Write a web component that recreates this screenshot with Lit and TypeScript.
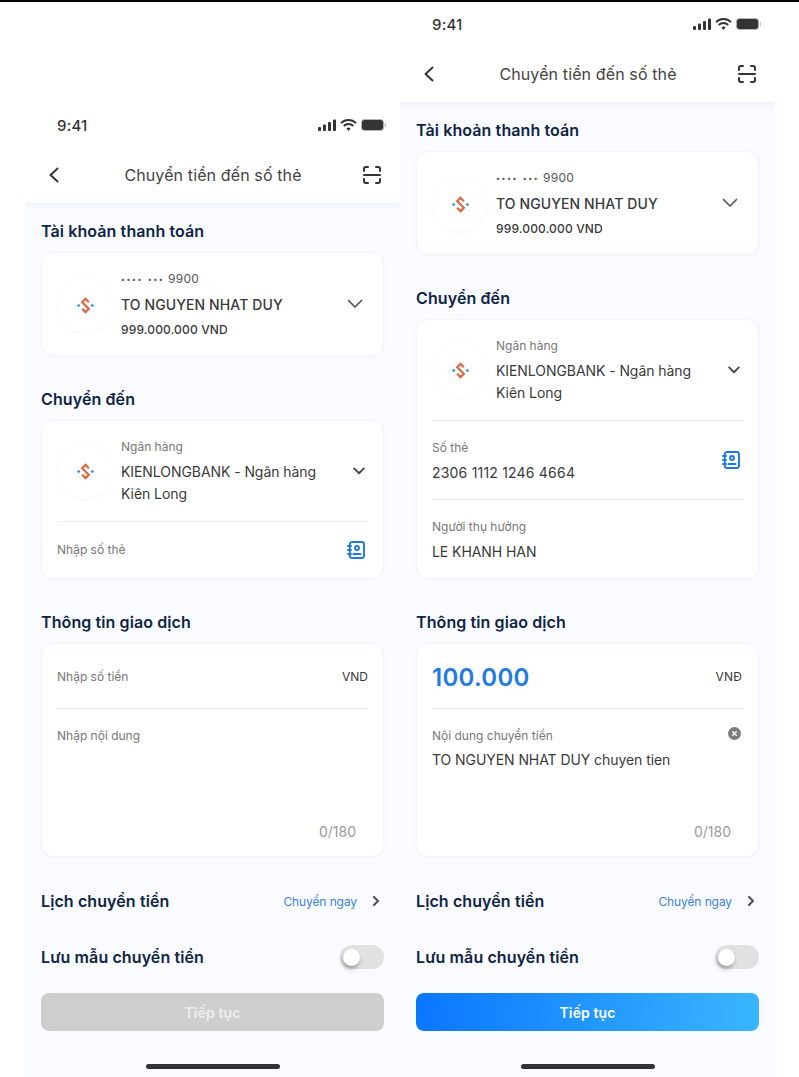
import { LitElement, html, css } from "lit";
import { customElement, property } from "lit/decorators.js";

const logo = html`<div class="logo"><svg width="17" height="17" viewBox="0 0 18 18" fill="none">
  <path d="M12.600 5.600 9 2 5.400 5.600 12.600 12.400 9 16 5.400 12.400" stroke="#e2673f" stroke-width="2.300" stroke-linejoin="miter"/>
  <g fill="#3d9fd6">
    <rect x="0.400" y="7.600" width="2.800" height="2.800" transform="rotate(45 1.800 9)"/>
    <rect x="14.800" y="7.600" width="2.800" height="2.800" transform="rotate(45 16.200 9)"/>
  </g>
</svg></div>`;

const chevron = (cls: string) => html`<svg class=${cls} viewBox="0 0 16 16" fill="none" stroke="currentColor" stroke-linecap="round" stroke-linejoin="round"><path d="M1.500 4.500 8 11l6.500-6.500"/></svg>`;

const contact = html`<svg class="contact" width="18" height="18" viewBox="0 0 18 18" fill="none" stroke="#1f78e0" stroke-width="1.900" stroke-linecap="round" stroke-linejoin="round">
  <rect x="2.800" y="1" width="14.200" height="16" rx="2.200"/>
  <circle cx="10" cy="7" r="2"/>
  <path d="M6.400 13h7.200"/>
  <path d="M1 5h3M1 9h3M1 13h3"/>
</svg>`;

@customElement("pay-phone")
class PayPhone extends LitElement {
  @property({ type: Boolean }) filled = false;
  static styles = css`
    :host { display: flex; flex-direction: column; width: 375px; background: #f9fbff; font-family: Inter, "Noto Sans", sans-serif; color: #333; }
    .top { background: #fff; box-shadow: 0 2px 5px rgba(40, 100, 190, 0.08); clip-path: inset(0 0 -10px 0); position: relative; }
    .status { height: 50px; display: flex; align-items: center; justify-content: space-between; padding: 0 14px 2px 32px; box-sizing: border-box; }
    .time { font-size: 15px; font-weight: 500; letter-spacing: 0.2px; color: #333; }
    .status svg { display: block; }
    .head { height: 52px; display: grid; grid-template-columns: 60px 1fr 60px; align-items: center; padding: 0 19px 4px 22px; box-sizing: border-box; }
    .head .scan { justify-self: end; }
    .title { font-size: 16px; color: #444; letter-spacing: 0.12px; text-align: center; position: relative; left: -1px; }
    .body { flex: 1; display: flex; flex-direction: column; padding: 0 16px; }
    h2 { margin: 0; font-size: 16px; font-weight: 600; color: #0f2445; line-height: 20px; letter-spacing: 0.1px; }
    .sec1 { margin-top: 18px; }
    .card { background: #fff; border-radius: 12px; border: 1px solid #f0f4fb; box-sizing: border-box; box-shadow: 0 1px 2px rgba(60, 110, 200, 0.03); }
    .acct { margin-top: 11px; height: 104px; display: flex; align-items: center; padding: 0 20px 0 16px; }
    .logo { width: 54px; height: 54px; border-radius: 50%; background: #fff; box-shadow: 0 1px 5px rgba(60, 90, 150, 0.05); display: flex; align-items: center; justify-content: center; flex: none; margin-left: 1px; margin-right: 8px; position: relative; top: 1px; left: -1px; }
    .acct .lines { flex: 1; }
    .mask { font-size: 12px; line-height: 18px; color: #555; letter-spacing: 0.3px; }
    .dots { font-size: 7px; letter-spacing: 1.600px; word-spacing: 1px; vertical-align: 1px; }
    .name { font-size: 14px; font-weight: 500; line-height: 32px; color: #3a3a3a; letter-spacing: 0.1px; }
    .bal { font-size: 12px; font-weight: 500; line-height: 18px; color: #3a3a3a; letter-spacing: 0.15px; }
    .chev16 { width: 16px; height: 16px; stroke-width: 1.700; color: #555; flex: none; }
    .to-title { margin-top: 33px; }
    .to { margin-top: 11px; padding: 0 15px; }
    .bankrow { display: flex; align-items: center; height: 100px; }
    .bankrow .lines { flex: 1; padding-top: 1px; }
    .bankrow .logo { margin-right: 9px; left: 0; top: 0; }
    .lab { font-size: 12px; line-height: 18px; color: #777; }
    .val { font-size: 14px; line-height: 22px; color: #3a3a3a; letter-spacing: -0.07px; }
    .val.digits { letter-spacing: 0.2px; }
    .bankrow .lines .lab { margin-bottom: 5px; }
    .chev12 { width: 12px; height: 12px; stroke-width: 2.400; color: #444; margin-right: 3px; position: relative; top: 0; }
    .sep { height: 1px; background: #e9ecf1; }
    .field { height: 78px; display: flex; align-items: center; justify-content: space-between; }
    .field .lab { margin-bottom: 5px; }
    .field .text { padding-top: 2px; }
    .field.ben .text { padding-top: 3px; }
    .field.one { height: 56px; }
    .field.one .lab { margin: 0; }
    .contact { margin-right: 3px; }
    .info-title { margin-top: 33px; }
    .info { margin-top: 11px; height: 214px; padding: 0 15px; display: flex; flex-direction: column; }
    .amt { height: 64px; display: flex; align-items: center; justify-content: space-between; }
    .amt .lab { position: relative; top: 1px; }
    .amount { font-size: 24px; font-weight: 600; color: #1f7ae8; letter-spacing: 0.3px; position: relative; top: 1px; }
    .cur { font-size: 12px; color: #3a3a3a; margin-right: 1px; }
    .empty .cur { margin-right: 0; }
    .memo { flex: 1; display: flex; flex-direction: column; padding-top: 18px; }
    .memohead { display: flex; justify-content: space-between; align-items: center; height: 18px; margin-bottom: 4px; }
    .clear { width: 13px; height: 13px; margin-right: 2px; position: relative; top: -3px; }
    .count { margin-top: auto; align-self: flex-end; font-size: 14px; line-height: 20px; color: #9a9a9a; margin-right: 12px; margin-bottom: 14px; }
    .row { display: flex; align-items: center; justify-content: space-between; height: 20px; }
    .sched { margin-top: 34px; }
    .save { margin-top: 36px; }
    .now { display: flex; align-items: center; gap: 14px; font-size: 12px; color: #3b82e0; letter-spacing: -0.1px; }
    .chevr { width: 10px; height: 10px; stroke-width: 2.200; color: #555; margin-right: 3px; }
    .toggle { width: 44px; height: 24px; border-radius: 12px; background: #e1e1e1; display: flex; align-items: center; padding-left: 3px; box-sizing: border-box; }
    .knob { width: 17px; height: 17px; border-radius: 50%; background: #fff; box-shadow: -1px 3px 4px rgba(0, 0, 0, 0.3); }
    .btn { margin-top: 26px; height: 38px; border-radius: 8px; display: flex; align-items: center; justify-content: center; font-size: 14px; font-weight: 600; letter-spacing: 0.1px; color: #fff; background: linear-gradient(95deg, #0a76ff 0%, #3ab6ff 100%); }
    .btn.off { background: #cecece; color: #eeeeee; }
    .homebar { display: flex; justify-content: center; height: 46px; padding-top: 33px; box-sizing: border-box; }
    .homebar i { display: block; width: 134px; height: 5px; border-radius: 3px; background: #333; }
  `;
  render() {
    const f = this.filled;
    return html`
      <div class="top">
        <div class="status">
          <span class="time">9:41</span>
          <svg width="68" height="12" viewBox="0 0 68 12">
            <g fill="#333">
              <rect x="0" y="8" width="3" height="4" rx="1"/>
              <rect x="5" y="5.500" width="3" height="6.500" rx="1"/>
              <rect x="10" y="3" width="3" height="9" rx="1"/>
              <rect x="15" y="0.500" width="3" height="11.500" rx="1"/>
            </g>
            <g fill="none" stroke="#333" stroke-width="1.900">
              <path d="M23 4.200a10.500 10.500 0 0 1 15 0"/>
              <path d="M25.800 7a6.500 6.500 0 0 1 9.400 0"/>
            </g>
            <path d="M28.400 9.500a3 3 0 0 1 4.200 0L30.500 12Z" fill="#333"/>
            <rect x="43.500" y="0.500" width="22" height="11" rx="3" fill="#333" stroke="#b5b5b5"/>
            <rect x="66.500" y="4" width="1.500" height="4" rx="0.700" fill="#c4c4c4"/>
          </svg>
        </div>
        <div class="head">
          <svg width="16" height="16" viewBox="0 0 16 16" fill="none" stroke="#333" stroke-width="2" stroke-linecap="round" stroke-linejoin="round"><path d="M10.500 1.500 3.500 8l7 6.500"/></svg>
          <span class="title">Chuyển tiền đến số thẻ</span>
          <svg class="scan" width="18" height="18" viewBox="0 0 18 18" fill="none" stroke="#333" stroke-width="2" stroke-linecap="round">
            <path d="M1 5V3a2 2 0 0 1 2-2h2M13 1h2a2 2 0 0 1 2 2v2M1 13v2a2 2 0 0 0 2 2h2M13 17h2a2 2 0 0 0 2-2v-2M1 9h16"/>
          </svg>
        </div>
      </div>
      <div class="body">
        <h2 class="sec1">Tài khoản thanh toán</h2>
        <div class="card acct">
          ${logo}
          <div class="lines">
            <div class="mask"><span class="dots">•••• •••</span> 9900</div>
            <div class="name">TO NGUYEN NHAT DUY</div>
            <div class="bal">999.000.000 VND</div>
          </div>
          ${chevron("chev16")}
        </div>
        <h2 class="to-title">Chuyển đến</h2>
        <div class="card to">
          <div class="bankrow">
            ${logo}
            <div class="lines">
              <div class="lab">Ngân hàng</div>
              <div class="val">KIENLONGBANK - Ngân hàng<br />Kiên Long</div>
            </div>
            ${chevron("chev12")}
          </div>
          <div class="sep"></div>
          ${f
            ? html`
                <div class="field num">
                  <div class="text"><div class="lab">Số thẻ</div><div class="val digits">2306 1112 1246 4664</div></div>
                  ${contact}
                </div>
                <div class="sep"></div>
                <div class="field ben">
                  <div class="text"><div class="lab">Người thụ hưởng</div><div class="val">LE KHANH HAN</div></div>
                </div>
              `
            : html`<div class="field one"><div class="lab">Nhập số thẻ</div>${contact}</div>`}
        </div>
        <h2 class="info-title">Thông tin giao dịch</h2>
        <div class="card info ${f ? "" : "empty"}">
          <div class="amt">
            ${f ? html`<span class="amount">100.000</span>` : html`<span class="lab">Nhập số tiền</span>`}
            <span class="cur">${f ? "VNĐ" : "VND"}</span>
          </div>
          <div class="sep"></div>
          <div class="memo">
            <div class="memohead">
              <span class="lab">${f ? "Nội dung chuyển tiền" : "Nhập nội dung"}</span>
              ${f
                ? html`<svg class="clear" viewBox="0 0 13 13"><circle cx="6.500" cy="6.500" r="6.500" fill="#7c7c7c"/><path d="M4.700 4.700l3.600 3.600M8.300 4.700l-3.600 3.600" stroke="#fff" stroke-width="1.400" stroke-linecap="round"/></svg>`
                : ""}
            </div>
            ${f ? html`<div class="val">TO NGUYEN NHAT DUY chuyen tien</div>` : ""}
            <div class="count">0/180</div>
          </div>
        </div>
        <div class="row sched">
          <h2>Lịch chuyển tiền</h2>
          <span class="now">Chuyển ngay <svg class="chevr" viewBox="0 0 10 10" fill="none" stroke="currentColor" stroke-linecap="round" stroke-linejoin="round"><path d="M3 1l4 4-4 4"/></svg></span>
        </div>
        <div class="row save">
          <h2>Lưu mẫu chuyển tiền</h2>
          <div class="toggle"><div class="knob"></div></div>
        </div>
        <div class="btn ${f ? "" : "off"}">Tiếp tục</div>
        <div class="homebar"><i></i></div>
      </div>
    `;
  }
}

@customElement("app-root")
class AppRoot extends LitElement {
  static styles = css`
    :host { display: block; position: relative; width: 799px; height: 1077px; overflow: hidden; background: #fff; }
    .edge { position: absolute; inset: 0 0 auto 0; height: 2px; background: #000; }
    .wrap { display: flex; align-items: flex-end; height: 1077px; padding-left: 25px; box-sizing: border-box; }
    .left { height: 976px; }
    .right { height: 1077px; }
  `;
  render() {
    return html`<div class="wrap">
      <pay-phone class="left"></pay-phone>
      <pay-phone class="right" filled></pay-phone>
    </div>
    <div class="edge"></div>`;
  }
}
